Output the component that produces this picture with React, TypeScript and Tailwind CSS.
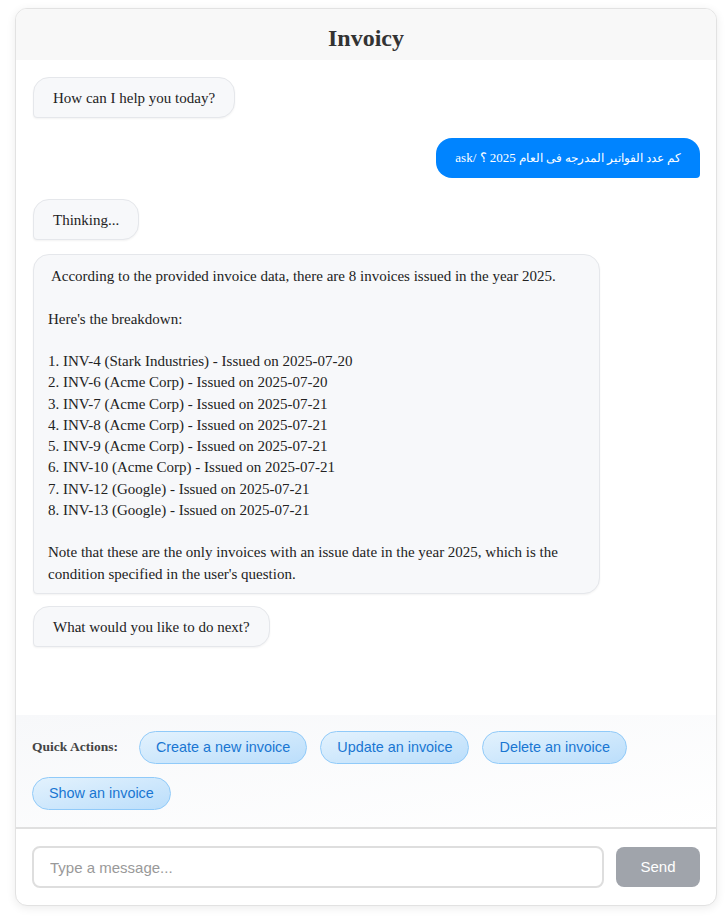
const serif = "font-['Liberation_Serif',serif]";
const sans = "font-['Liberation_Sans',Arial,sans-serif]";

const invoices = [
  "1. INV-4 (Stark Industries) - Issued on 2025-07-20",
  "2. INV-6 (Acme Corp) - Issued on 2025-07-20",
  "3. INV-7 (Acme Corp) - Issued on 2025-07-21",
  "4. INV-8 (Acme Corp) - Issued on 2025-07-21",
  "5. INV-9 (Acme Corp) - Issued on 2025-07-21",
  "6. INV-10 (Acme Corp) - Issued on 2025-07-21",
  "7. INV-12 (Google) - Issued on 2025-07-21",
  "8. INV-13 (Google) - Issued on 2025-07-21",
];

const actions = [
  "Create a new invoice",
  "Update an invoice",
  "Delete an invoice",
  "Show an invoice",
];

function BotBubble({ children }: { children: React.ReactNode }) {
  return (
    <div className="self-start rounded-[16px] rounded-bl-[4px] border border-[#e5e7eb] bg-[#f7f8fa] px-[19px] pb-[8px] pt-[10px] text-[15px] leading-[21px] text-[#222] shadow-[0_1px_2px_rgba(0,0,0,0.05)]">
      {children}
    </div>
  );
}

export default function App() {
  return (
    <div className={`min-h-screen bg-white ${serif}`}>
      <div className="ml-[15px] mt-[8px] flex h-[898px] w-[702px] flex-col overflow-hidden rounded-[12px] border border-[#e2e2e2] bg-white shadow-[0_2px_10px_rgba(0,0,0,0.08)]">
        <div className="flex h-[51px] shrink-0 items-center justify-center bg-[#f8f8f8] pt-[6px]">
          <h1 className="text-[24px] font-bold text-[#333]">Invoicy</h1>
        </div>

        <div className="flex flex-1 flex-col pl-[17px] pr-[16px] pt-[17px]">
          <BotBubble>How can I help you today?</BotBubble>

          <div
            dir="rtl"
            className="mt-[20px] self-end rounded-[16px] rounded-br-[4px] bg-[#0084ff] px-[19px] py-[10px] text-[13px] leading-[20px] text-white"
          >
            <span className="text-[11.5px] font-['Noto_Sans',sans-serif]">كم عدد الفواتير المدرجه فى العام</span>{" "}
            <span>2025 ؟ /ask</span>
          </div>

          <div className="mt-[21px] self-start">
            <BotBubble>Thinking...</BotBubble>
          </div>

          <div className="mt-[14px] w-[85%] self-start rounded-[16px] rounded-bl-[4px] border border-[#e5e7eb] bg-[#f7f8fa] pb-[8px] pl-[14px] pr-[20px] pt-[11px] text-[15px] leading-[21.25px] text-[#222] shadow-[0_1px_2px_rgba(0,0,0,0.05)]">
            <p className="whitespace-pre"> According to the provided invoice data, there are 8 invoices issued in the year 2025.</p>
            <p className="mt-[21.25px]">Here's the breakdown:</p>
            <div className="mt-[21.25px]">
              {invoices.map((line) => (
                <p key={line}>{line}</p>
              ))}
            </div>
            <p className="mt-[21.25px]">
              Note that these are the only invoices with an issue date in the year 2025, which is the
              <br />
              condition specified in the user's question.
            </p>
          </div>

          <div className="mt-[12px] self-start">
            <BotBubble>What would you like to do next?</BotBubble>
          </div>
        </div>

        <div className="flex shrink-0 flex-wrap items-center gap-[13px] border-b-2 border-[#e0e0e0] bg-gradient-to-br from-[#f7f8fa] to-white pl-[16px] pr-[16px] pb-[17px] pt-[16px]">
          <span className="mr-[8px] text-[13.5px] font-bold text-[#444]">Quick Actions:</span>
          {actions.map((a) => (
            <button
              key={a}
              className={`h-[33px] rounded-full border border-[#90caf9] bg-gradient-to-br from-[#e3f2fd] to-[#bbdefb] px-[16px] text-[14.4px] text-[#1976d2] ${sans}`}
            >
              {a}
            </button>
          ))}
        </div>

        <div className="flex shrink-0 items-center gap-[12px] pl-[16px] pr-[16px] pb-[17px] pt-[17px]">
          <input
            placeholder="Type a message..."
            className={`h-[42px] flex-1 rounded-[8px] border-2 border-[#dedede] px-[16px] text-[15px] text-[#333] outline-none placeholder:text-[#999] ${sans}`}
          />
          <button
            className={`h-[40px] w-[84px] rounded-[8px] bg-[#a0a4ab] text-[15px] text-white ${sans}`}
          >
            Send
          </button>
        </div>
      </div>
    </div>
  );
}
